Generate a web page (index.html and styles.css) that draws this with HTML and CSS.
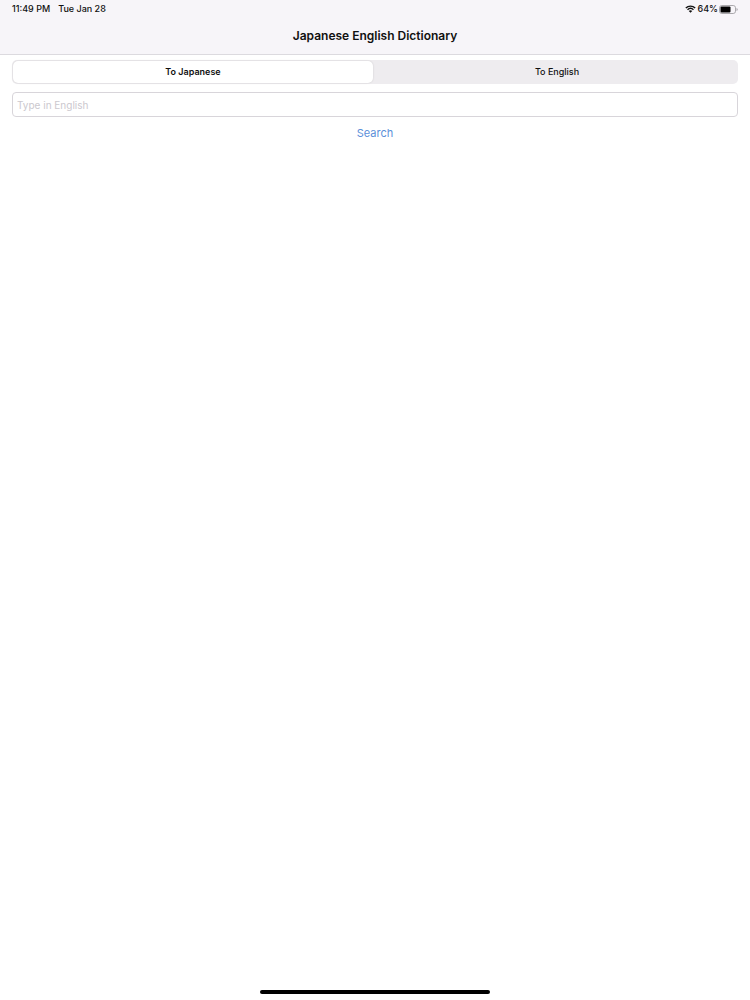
FILE: index.html
```html
<!DOCTYPE html>
<html lang="en">

    <head>
        <meta charset="utf-8" />
        <meta name="viewport" content="width=device-width, initial-scale=1.0" />
        <title>Japanese English Dictionary</title>

        <link rel="stylesheet" href="styles.css">
    </head>

    <body>
        <header class="header">
            <div class="status">
                <div class="status_group status_group--time">
                    <span>11:49 PM</span>
                    <span>Tue Jan 28</span>
                </div>

                <div class="status_group">
                    <svg class="wifi" viewBox="0 0 20 14" aria-hidden="true">
                        <path d="M1.5 5.2a12.4 12.4 0 0 1 17 0M4.6 8.3a8 8 0 0 1 10.8 0" fill="none" stroke="#111" stroke-width="2.6" />
                        <path d="M10 14 6.8 10.7a4.6 4.6 0 0 1 6.4 0z" fill="#111" />
                    </svg>
                    <span>64%</span>
                    <svg class="battery" viewBox="0 0 19 10" aria-hidden="true">
                        <rect x="0.5" y="1.500" width="16" height="8" rx="2.3" fill="none" stroke="#aaa8ac" />
                        <rect x="1.5" y="2.500" width="10" height="6" rx="1" fill="#000" />
                        <path d="M17.5 4v3q1.200-.4 1.200-1.500T17.500 4z" fill="#aaa8ac" />
                    </svg>
                </div>
            </div>

            <h1 class="title">Japanese English Dictionary</h1>
        </header>

        <main>
            <form class="search">
                <div class="tabs" role="radiogroup" aria-label="Translation direction">
                    <label class="tabs_item">
                        <input class="tabs_radio" type="radio" name="direction" value="ja" checked>
                        <span class="tabs_text">To Japanese</span>
                    </label>
                    <label class="tabs_item">
                        <input class="tabs_radio" type="radio" name="direction" value="en">
                        <span class="tabs_text">To English</span>
                    </label>
                </div>

                <input class="search_input" type="text" placeholder="Type in English" aria-label="Word to translate">
                <button class="search_button" type="button">Search</button>
            </form>
        </main>

        <div class="home_bar"></div>
    </body>

</html>
```
FILE: styles.css
```css
* {
    padding: 0;
    margin: 0;
    box-sizing: border-box;
}

body {
    display: flex;
    flex-direction: column;
    min-height: 100vh;
    font-family: Inter, "Liberation Sans", sans-serif;
    background-color: #fff;
    color: #111;
}

.header {
    background-color: #f7f5f9;
    border-bottom: 1px solid #dcdadf;
}

.status {
    display: flex;
    justify-content: space-between;
    padding: 0 12px;
    font-size: 9px;
    font-weight: 500;
    line-height: 18px;
}

.status_group {
    display: flex;
    align-items: center;
    gap: 1px;
}

.status_group--time {
    gap: 8px;
}

.wifi {
    width: 11px;
    height: 8px;
}

.battery {
    width: 19px;
    height: 10px;
}

.title {
    font-size: 12px;
    font-weight: 600;
    line-height: 36px;
    text-align: center;
}

.search {
    display: flex;
    flex-direction: column;
    align-items: center;
    padding: 5px 12px;
}

.tabs {
    display: flex;
    gap: 4px;
    width: 100%;
    padding: 1px;
    border-radius: 5px;
    background-color: #eeecef;
}

.tabs_item {
    flex: 1;
    cursor: pointer;
}

.tabs_radio {
    position: absolute;
    opacity: 0;
}

.tabs_text {
    display: block;
    border-radius: 5px;
    font-size: 9px;
    font-weight: 500;
    line-height: 22px;
    text-align: center;
}

.tabs_radio:checked + .tabs_text {
    background-color: #fff;
    font-weight: 600;
    box-shadow: 0 0 2px rgba(0, 0, 0, .15);
}

.tabs_radio:focus-visible + .tabs_text {
    outline: 1px solid #5b8fd9;
}

.search_input {
    width: 100%;
    height: 25px;
    margin-top: 8px;
    padding: 0 4px;
    border: 1px solid #d8d5da;
    border-radius: 4px;
    background-color: #fff;
    font-family: inherit;
    font-size: 10px;
}

.search_input::placeholder {
    color: #cbc8ce;
}

.search_button {
    margin-top: 8px;
    border: none;
    background: transparent;
    color: #5b8fd9;
    font-family: inherit;
    font-size: 11px;
    line-height: 16px;
    cursor: pointer;
}

.home_bar {
    width: 230px;
    height: 4px;
    margin: auto auto 6px;
    border-radius: 2px;
    background-color: #000;
}
```
